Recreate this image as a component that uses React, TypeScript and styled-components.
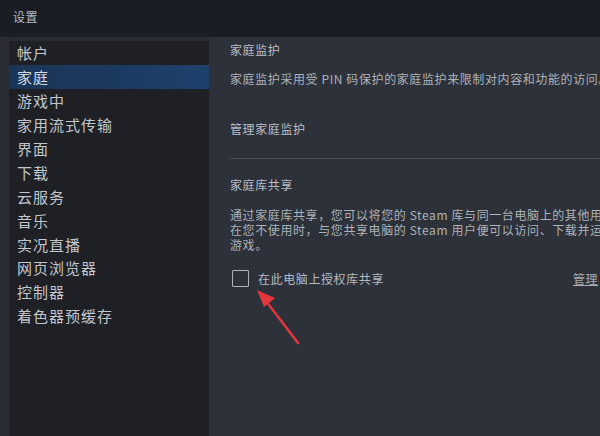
import React from "react";
import styled, { createGlobalStyle } from "styled-components";

const Global = createGlobalStyle`
  html, body { margin: 0; padding: 0; background: #1c1f25; }
  body { font-family: "Noto Sans CJK SC", "Liberation Sans", sans-serif; }
  #root { width: 600px; height: 436px; overflow: hidden; }
`;

const Window = styled.div`
  position: relative;
  width: 600px;
  height: 436px;
  display: flex;
  flex-direction: column;
  background: linear-gradient(180deg, #1a1d23 0%, #20242b 100%);
  overflow: hidden;
`;

const TitleBar = styled.div`
  height: 37px;
  flex: none;
  display: flex;
  align-items: flex-start;
  padding: 9px 0 0 13px;
  box-sizing: border-box;
  color: #b9bdc4;
  font-size: 12px;
  letter-spacing: 0.5px;
  line-height: 16px;
`;

const Body = styled.div`
  flex: 1;
  display: flex;
  padding-left: 9px;
  background: #2a2d33;
`;

const Sidebar = styled.nav`
  width: 200px;
  flex: none;
  display: flex;
  flex-direction: column;
  background: #1e2025;
  border-top: 4px solid #272b32;
  box-sizing: border-box;
`;

const NavItem = styled.div<{ $active?: boolean }>`
  height: 23.9px;
  flex: none;
  display: flex;
  align-items: center;
  padding-left: 8px;
  font-size: 15px;
  letter-spacing: 1px;
  color: ${(p) => (p.$active ? "#d6dae0" : "#c3c6cc")};
  background: ${(p) =>
    p.$active
      ? "linear-gradient(90deg, #1b3556 0%, #1c3b62 60%, #1e416c 100%)"
      : "transparent"};
`;

const Content = styled.main`
  flex: 1;
  display: flex;
  flex-direction: column;
  padding: 5px 0 0 21px;
  background: #2d3139;
  overflow: hidden;
`;

const Heading = styled.div<{ $top?: number }>`
  margin-top: ${(p) => p.$top ?? 0}px;
  font-size: 12px;
  line-height: 16px;
  letter-spacing: 0.6px;
  color: #babec5;
  white-space: nowrap;
`;

const Desc = styled.div<{ $top?: number }>`
  margin-top: ${(p) => p.$top ?? 0}px;
  font-size: 12px;
  line-height: 15px;
  letter-spacing: 0.6px;
  color: #adb1b8;
  white-space: nowrap;
`;

const Divider = styled.div`
  margin-top: 21px;
  height: 1px;
  background: #474b53;
`;

const CheckRow = styled.div`
  margin-top: 17px;
  display: flex;
  align-items: center;
  padding-left: 2px;
  height: 18px;
`;

const Checkbox = styled.div`
  width: 15px;
  height: 15px;
  border: 1.5px solid #aeb2b9;
  border-radius: 1px;
  flex: none;
`;

const CheckLabel = styled.span`
  margin-left: 9px;
  font-size: 12px;
  letter-spacing: 0.6px;
  color: #b6bac1;
  white-space: nowrap;
`;

const LinkText = styled.span`
  margin-left: auto;
  margin-right: -20px;
  font-size: 12px;
  letter-spacing: 0.6px;
  color: #a9adb4;
  text-decoration: underline;
  white-space: nowrap;
  width: 47px;
`;

const Arrow = styled.svg`
  position: absolute;
  left: 0;
  top: 0;
  pointer-events: none;
`;

const items = [
  "帐户",
  "家庭",
  "游戏中",
  "家用流式传输",
  "界面",
  "下载",
  "云服务",
  "音乐",
  "实况直播",
  "网页浏览器",
  "控制器",
  "着色器预缓存",
];

export default function App() {
  return (
    <>
      <Global />
      <Window>
        <TitleBar>设置</TitleBar>
        <Body>
          <Sidebar>
            {items.map((t) => (
              <NavItem key={t} $active={t === "家庭"}>
                {t}
              </NavItem>
            ))}
          </Sidebar>
          <Content>
            <Heading>家庭监护</Heading>
            <Desc $top={13}>家庭监护采用受 PIN 码保护的家庭监护来限制对内容和功能的访问。</Desc>
            <Heading $top={35}>管理家庭监护</Heading>
            <Divider />
            <Heading $top={18}>家庭库共享</Heading>
            <Desc $top={14}>通过家庭库共享，您可以将您的 Steam 库与同一台电脑上的其他用户共享。</Desc>
            <Desc>在您不使用时，与您共享电脑的 Steam 用户便可以访问、下载并运行您的</Desc>
            <Desc>游戏。</Desc>
            <CheckRow>
              <Checkbox />
              <CheckLabel>在此电脑上授权库共享</CheckLabel>
              <LinkText>管理</LinkText>
            </CheckRow>
          </Content>
        </Body>
        <Arrow width="600" height="436" viewBox="0 0 600 436">
          <line x1="298" y1="343" x2="266" y2="301" stroke="#e2353c" strokeWidth="2.5" strokeLinecap="round" />
          <polygon points="257,290 275,298 264,307" fill="#e2353c" />
        </Arrow>
      </Window>
    </>
  );
}
